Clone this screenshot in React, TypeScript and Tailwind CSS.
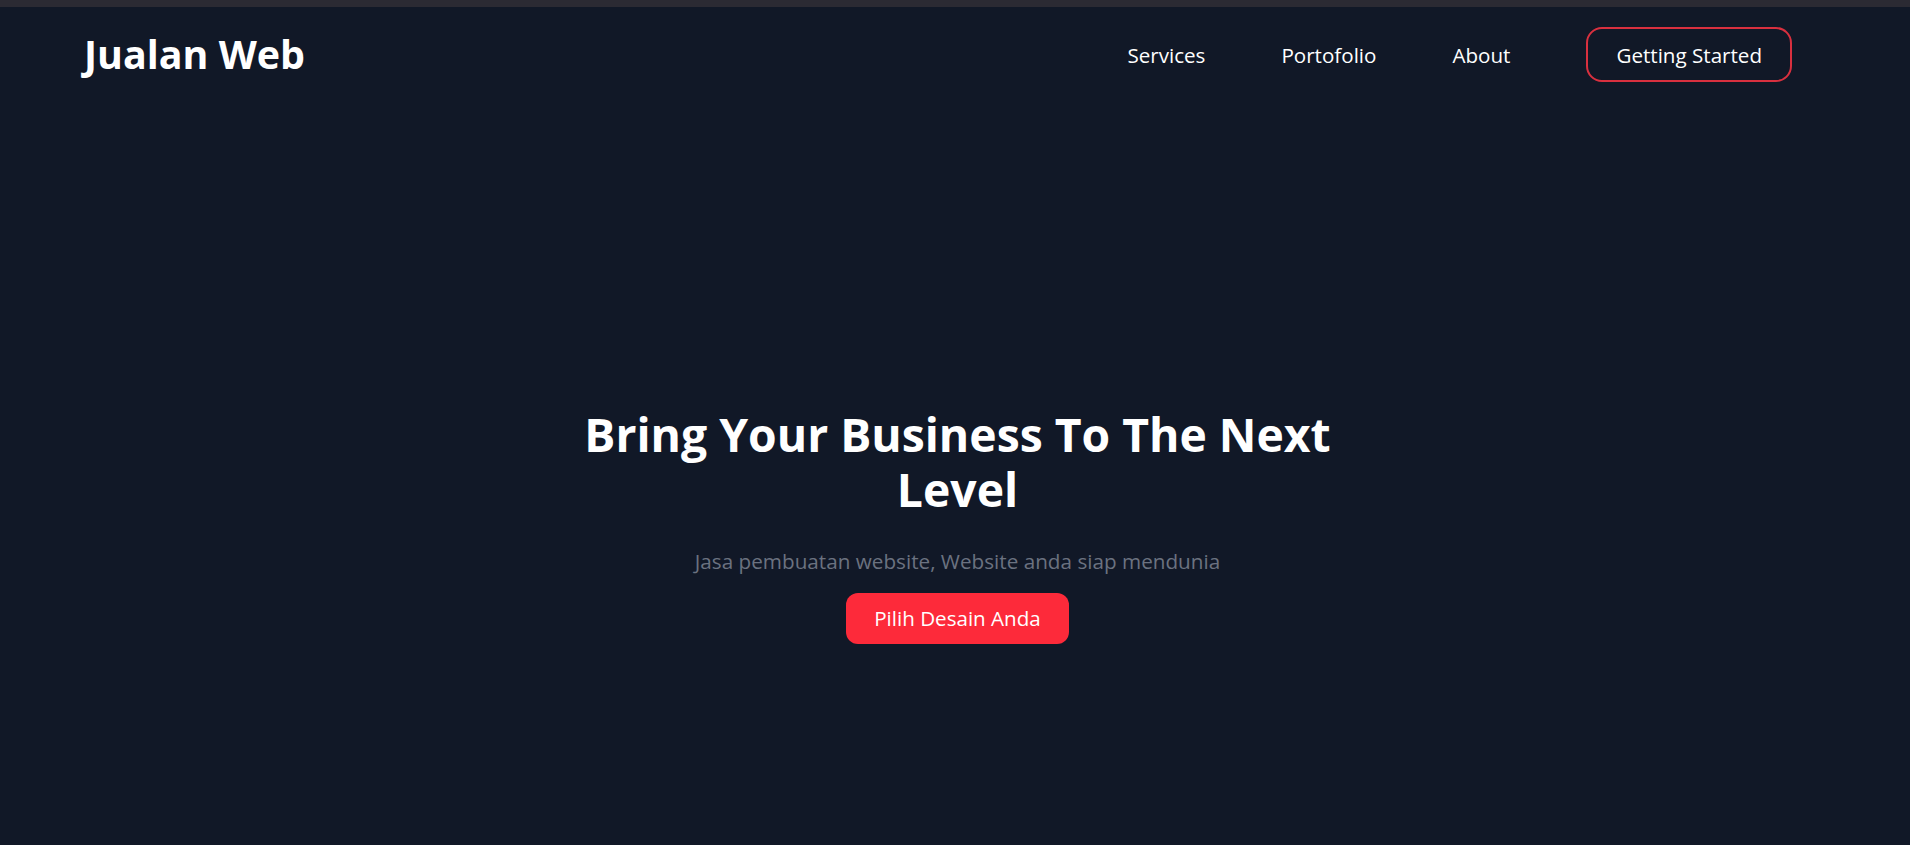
import React from "react";

export default function App() {
  const font = { fontFamily: '"Open Sans", "Noto Sans", sans-serif' };
  return (
    <div className="min-h-screen bg-[#111827] flex flex-col text-white" style={font}>
      <div className="h-[7px] bg-[#2b2a33]" />
      <header className="flex items-center justify-between pl-[84px] pr-[118px] pt-[20px]">
        <a className="text-[39.4px] font-bold leading-none">Jualan Web</a>
        <nav className="flex items-center gap-[76px] text-[20.6px]">
          <a className="pt-[1px]">Services</a>
          <a className="pt-[1px]">Portofolio</a>
          <a className="pt-[1px]">About</a>
          <a className="h-[55px] px-[28px] pt-[1px] flex items-center rounded-2xl border-2 border-[#d9303f]">
            Getting Started
          </a>
        </nav>
      </header>
      <main className="flex flex-col items-center text-center pt-[325px] pl-[5px]">
        <h1 className="text-[46.3px] leading-[55px] font-bold max-w-[780px]">
          Bring Your Business To The Next Level
        </h1>
        <p className="mt-[30px] text-[20.7px] leading-[28px] text-[#6b7280]">
          Jasa pembuatan website, Website anda siap mendunia
        </p>
        <button className="mt-[18px] h-[51px] px-[28px] rounded-xl bg-[#fd2a3a] text-[20.6px] text-white">
          Pilih Desain Anda
        </button>
      </main>
    </div>
  );
}
